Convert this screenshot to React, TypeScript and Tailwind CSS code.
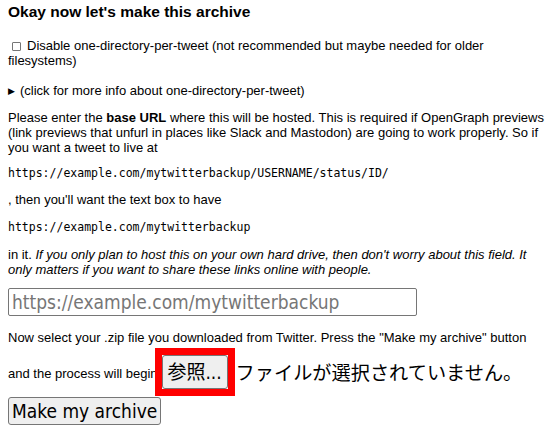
import React from 'react';

const sans = "font-['Liberation_Sans',Arial,sans-serif]";
const mono = "font-['DejaVu_Sans_Mono','Liberation_Mono',monospace]";
const wide = "font-['DejaVu_Sans_Condensed','DejaVu_Sans','Noto_Sans_CJK_JP',sans-serif]";
const jp = "font-['Noto_Sans_CJK_JP',sans-serif]";

export default function App() {
  return (
    <div className={`${sans} bg-white px-2 pt-[3px] text-[13px] leading-[15px] text-black w-[560px] h-[433px] overflow-hidden`}>
      <h2 className="text-[15.5px] leading-[18px] font-bold">Okay now let's make this archive</h2>

      <div className="mt-[17px]">
        <label>
          <span className="inline-block w-[9px] h-[9px] border border-[#767676] rounded-[1px] ml-[4px] mr-[6px] align-[-1px]" />
          Disable one-directory-per-tweet (not recommended but maybe needed for older filesystems)
        </label>
      </div>

      <div className="mt-[15px]">
        <span className="text-[9px] mr-[5px] align-[1px]">▶</span>
        (click for more info about one-directory-per-tweet)
      </div>

      <p className="mt-[11px]">
        Please enter the <b>base URL</b> where this will be hosted. This is required if OpenGraph previews (link
        previews that unfurl in places like Slack and Mastodon) are going to work properly. So if you want a tweet
        to live at
      </p>

      <pre className={`${mono} text-[11.5px] leading-[14px] mt-[11px]`}>https://example.com/mytwitterbackup/USERNAME/status/ID/</pre>

      <p className="mt-[12px]">, then you'll want the text box to have</p>

      <pre className={`${mono} text-[11.5px] leading-[14px] mt-[13px]`}>https://example.com/mytwitterbackup</pre>

      <p className="mt-[13px]">
        in it.{' '}
        <i>
          If you only plan to host this on your own hard drive, then don't worry about this field. It only matters if
          you want to share these links online with people.
        </i>
      </p>

      <input
        type="text"
        placeholder="https://example.com/mytwitterbackup"
        className={`${wide} mt-[11px] block w-[409px] h-[28px] border border-[#767676] rounded-[2px] px-[3px] text-[19px] placeholder:text-[#767676] outline-none`}
      />

      <p className="mt-[14px]">Now select your .zip file you downloaded from Twitter. Press the "Make my archive" button</p>

      <div className="mt-[2px] flex items-center h-[49px]">
        <span className="mt-[4px]">and the process will begin</span>
        <span className="-mx-[3px] -my-[7px] inline-flex border-[7px] border-[#ff0000]">
          <button
            className={`${wide} h-[34px] w-[66px] bg-[#efefef] border border-[#767676] rounded-[3px] text-[19px] leading-[24px]`}
          >
            参照...
          </button>
        </span>
        <span className={`${jp} ml-[4px] text-[19.2px] leading-[24px]`}>ファイルが選択されていません。</span>
      </div>

      <button
        className={`${wide} mt-[1px] block h-[28px] px-[3px] bg-[#efefef] border border-[#767676] rounded-[3px] text-[19px] leading-[24px]`}
      >
        Make my archive
      </button>
    </div>
  );
}
